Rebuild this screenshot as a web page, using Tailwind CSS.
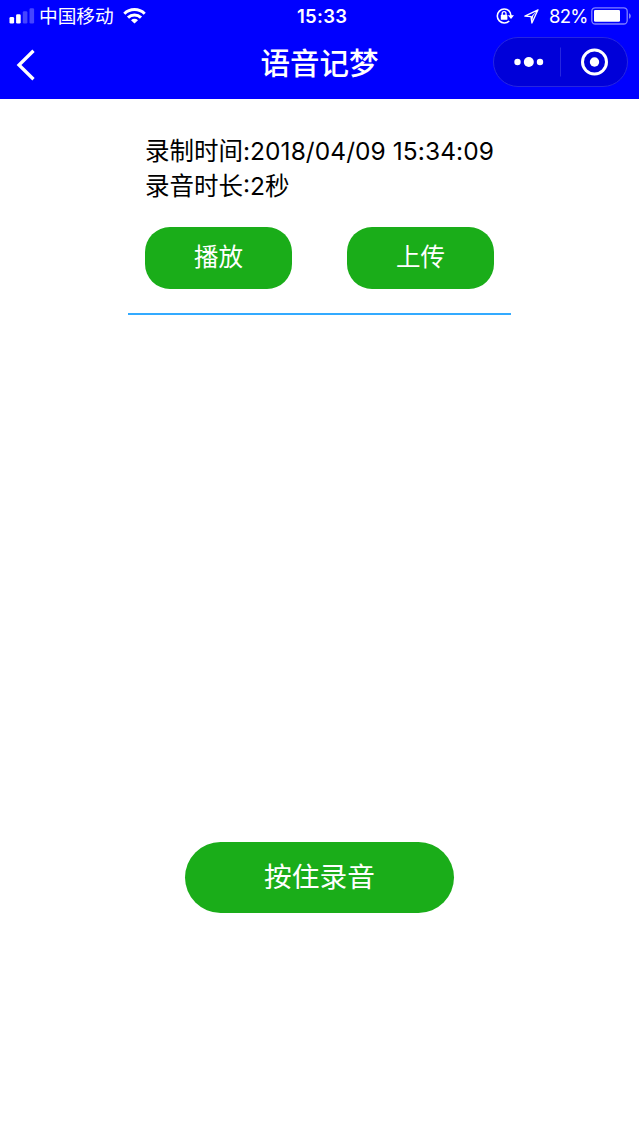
<!DOCTYPE html>
<html lang="zh-CN">
<head>
    <meta charset="UTF-8">
    <title>语音记梦</title>
    <script src="https://cdn.jsdelivr.net/npm/@tailwindcss/browser@4"></script>
</head>
<body class="bg-white min-h-screen font-['Inter','Noto_Sans_CJK_SC',sans-serif] text-black">

<header class="bg-[#0000ff] text-white h-[99px]">
    <!-- Status bar -->
    <div class="grid grid-cols-[297px_1fr_auto] items-center h-8 pl-[9px] pr-2">
        <div class="flex items-center">
            <svg class="w-[26px] h-4" viewBox="0 0 26 16" fill="#fff">
                <rect x="0.5" y="9" width="4.6" height="6.5" rx="1.3"/>
                <rect x="7.1" y="6.3" width="4.6" height="9.2" rx="1.3"/>
                <rect x="13.8" y="3.2" width="4.6" height="12.3" rx="1.3" opacity=".27"/>
                <rect x="20.5" y="0.2" width="4.6" height="15.3" rx="1.3" opacity=".27"/>
            </svg>
            <span class="ml-1 pt-0.5 text-[18.7px] leading-[30px] font-normal whitespace-nowrap">中国移动</span>
            <svg class="ml-[9px] w-[23px] h-4" viewBox="0 0 23 16" fill="none" stroke="#fff" stroke-width="3">
                <path d="M1.3 5.7a14.5 14.5 0 0 1 20.4 0"/>
                <path d="M5 9.6a9.3 9.3 0 0 1 13 0"/>
                <path d="M8 12.2a5 5 0 0 1 7 0L11.5 15.6z" fill="#fff" stroke="none"/>
            </svg>
        </div>
        <span class="-ml-[9px] text-[18.5px] leading-8 font-semibold tracking-[0.3px]">15:33</span>
        <div class="flex items-center">
            <svg class="w-[18px] h-4" viewBox="0 0 18 16" fill="none" stroke="#fff" stroke-width="1.6">
                <path d="M13.2 3A7 7 0 1 0 13.2 13M12.4 2.3A7 7 0 0 1 15 8"/>
                <path d="M11.8 7.2h6.2L15 11z" fill="#fff" stroke="none"/>
                <rect x="4.8" y="6.8" width="6.6" height="5" rx=".6" fill="#fff" stroke="none"/>
                <path d="M6.2 7.4V5.5a1.900 1.900 0 0 1 3.800 0v1.900" stroke-width="1.3"/>
            </svg>
            <svg class="ml-[10px] w-[15px] h-[15px]" viewBox="0 0 15 15" fill="none" stroke="#fff" stroke-width="1.3" stroke-linejoin="round">
                <path d="M14 .8L.9 7.200l6.100.5.9 6.300z"/>
                <path d="M14 .8L7 7.700l.9 6.300L9.200 7z" fill="#fff" stroke="none"/>
            </svg>
            <span class="ml-[10px] w-[42px] text-[18.5px] leading-8 font-normal tracking-[-0.7px] whitespace-nowrap">82%</span>
            <svg class="w-10 h-[18px]" viewBox="0 0 40 18">
                <rect x=".8" y=".8" width="35.4" height="16.2" rx="3.5" fill="none" stroke="#fff" stroke-opacity=".5" stroke-width="1.3"/>
                <rect x="3" y="3" width="26" height="11.8" rx="1.3" fill="#fff"/>
                <path d="M38 6.2c2.4 1 2.4 4.6 0 5.6z" fill="#fff" opacity=".5"/>
            </svg>
        </div>
    </div>

    <!-- Title bar -->
    <div class="grid grid-cols-3 items-center h-[60px] px-[11px]">
        <svg class="ml-[2.5px] mt-1 w-6 h-8" viewBox="0 0 24 32" fill="none" stroke="#fff" stroke-width="3.3">
            <path d="M19.5 1.8L5 16l14.5 14.2"/>
        </svg>
        <h1 class="text-center text-[29.5px] leading-[62px] font-medium whitespace-nowrap">语音记梦</h1>
        <div class="justify-self-end -mt-0.5 flex items-center w-[135px] h-[50px] rounded-full bg-[#0000d9] border border-[#2626e0]">
            <svg class="w-[133px] h-12" viewBox="0 0 133 48" fill="#fff">
                <circle cx="23.5" cy="24" r="3.2"/>
                <circle cx="34.8" cy="24" r="5"/>
                <circle cx="46" cy="24" r="3.2"/>
                <rect x="66" y="9.5" width="1" height="29" opacity=".15"/>
                <circle cx="100.500" cy="24" r="12" fill="none" stroke="#fff" stroke-width="3"/>
                <circle cx="100.500" cy="24" r="4.7"/>
            </svg>
        </div>
    </div>
</header>

<!-- Recording -->
<main class="flex flex-col items-center">
    <section class="w-[383px] h-[216px] pt-[34px] px-[17px] border-b-2 border-[#33aaff]">
        <div class="text-[24.5px] leading-9 whitespace-nowrap">
            <p>录制时间:<span class="tracking-[0.07px]">2018/04/09 15:34:09</span></p>
            <p class="-mt-px">录音时长:2秒</p>
        </div>
        <div class="flex justify-between mt-[23px]">
            <button class="w-[147px] h-[62px] rounded-[25px] bg-[#1aad19] text-white text-[24.5px] leading-[60px] pb-0.5">播放</button>
            <button class="w-[147px] h-[62px] rounded-[25px] bg-[#1aad19] text-white text-[24.5px] leading-[60px] pb-0.5">上传</button>
        </div>
    </section>
    <button class="mt-[527px] w-[269px] h-[71px] rounded-full bg-[#1aad19] text-white text-[27.7px] leading-[71px]">按住录音</button>
</main>

</body>
</html>
